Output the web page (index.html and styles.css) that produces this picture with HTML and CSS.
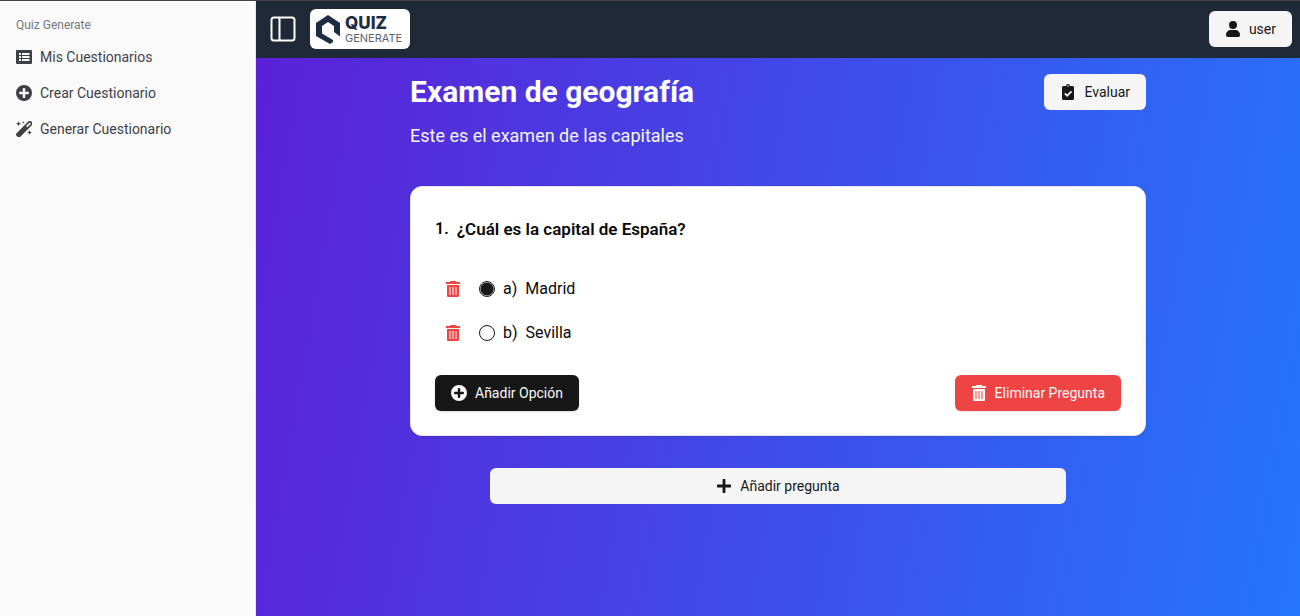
FILE: index.html
```html
<!DOCTYPE html>
<html lang="es">
<head>
<meta charset="utf-8">
<meta name="viewport" content="width=device-width, initial-scale=1">
<title>Quiz Generate</title>
<link rel="stylesheet" href="styles.css">
</head>
<body>
<svg class="sprite" aria-hidden="true">
  <symbol id="plus-circle" viewBox="0 0 512 512"><path d="M256 512A256 256 0 1 0 256 0a256 256 0 1 0 0 512zM216 376V296H136c-22 0-40-18-40-40s18-40 40-40h80v-80c0-22 18-40 40-40s40 18 40 40v80h80c22 0 40 18 40 40s-18 40-40 40h-80v80c0 22-18 40-40 40s-40-18-40-40z"/></symbol>
  <symbol id="trash" viewBox="0 0 16 16"><path d="M5.500 0h5l1 1H15v2H1V1h3.500z"/><path fill-rule="evenodd" d="M2 4h12v11a1 1 0 0 1-1 1H3a1 1 0 0 1-1-1zM4 6v8h2V6zM7 6v8h2V6zM10 6v8h2V6z"/><path opacity=".5" d="M4 6h2v8H4zM7 6h2v8H7zM10 6h2v8h-2z"/></symbol>
</svg>
<div class="app">
  <aside class="sidebar">
    <p class="sidebar-title">Quiz Generate</p>
    <nav class="menu">
      <a class="menu-item" href="#"><svg class="icon" viewBox="0 0 16 16"><path fill-rule="evenodd" d="M1 1h14a1 1 0 0 1 1 1v12a1 1 0 0 1-1 1H1a1 1 0 0 1-1-1V2a1 1 0 0 1 1-1zM3 4v2h2V4zM6 4v2h7.500V4zM3 7v2h2V7zM6 7v2h7.500V7zM3 10v2h2v-2zM6 10v2h7.500v-2z"/></svg>Mis Cuestionarios</a>
      <a class="menu-item" href="#"><svg class="icon"><use href="#plus-circle"/></svg>Crear Cuestionario</a>
      <a class="menu-item" href="#"><svg class="icon" viewBox="0 0 16 16"><path fill-rule="evenodd" transform="rotate(-45 8 8)" d="M-.5 5.700h17.500a1.500 1.500 0 0 1 1.500 1.500v2.200a1.500 1.500 0 0 1-1.500 1.500H-.5A1.500 1.500 0 0 1-2 9.400V7.200a1.500 1.500 0 0 1 1.500-1.500zM11.500 7.400v1.800h5.200V7.400z"/><path d="m2.500.3.7 1.700 1.800.7-1.800.7-.7 1.800-.7-1.800L0 2.700 1.800 2zM13.500 9l.7 1.800 1.800.7-1.800.7-.7 1.800-.7-1.800-1.800-.7 1.800-.7zM7.300 0l.4.900.9.4-.9.4-.4.900-.4-.900-.9-.4.900-.4z"/></svg>Generar Cuestionario</a>
    </nav>
  </aside>
  <div class="content">
    <header class="topbar">
      <button class="toggle" type="button" aria-label="Alternar menú"><svg class="toggle-icon" viewBox="0 0 26 26"><rect x="1.500" y="1.500" width="23" height="23" rx="2.500"/><path d="M9.500 1v24"/></svg></button>
      <a class="logo" href="#">
        <svg class="logo-mark" viewBox="0 0 24 29"><path d="M12 0 24 8v13.500L18 17v-6l-6-4-6 4v7.500L17 25v2l-3 2L0 21V8z"/></svg>
        <span class="logo-text"><span class="logo-quiz">QUIZ</span><span class="logo-generate">GENERATE</span></span>
      </a>
      <button class="button button-light user" type="button"><svg class="icon" viewBox="0 0 16 16"><circle cx="8" cy="4" r="4"/><path d="M1 14c0-3 2-5 5-5h4c3 0 5 2 5 5 0 1.300-.7 2-2 2H3c-1.300 0-2-.7-2-2z"/></svg>user</button>
    </header>
    <main class="main">
      <div class="quiz">
        <div class="quiz-head">
          <h1 class="quiz-title">Examen de geografía</h1>
          <button class="button button-light" type="button"><svg class="icon" viewBox="0 0 16 16"><path fill-rule="evenodd" d="M3.500 2H6a2 2 0 0 1 4 0h2.500A1.500 1.500 0 0 1 14 3.500v11a1.500 1.500 0 0 1-1.500 1.500h-9A1.500 1.500 0 0 1 2 14.500v-11A1.500 1.500 0 0 1 3.500 2zM8 1.200a.8.8 0 1 0 0 1.600.8.8 0 0 0 0-1.600zM4.200 10l2.900 2.900 5-4.900-1.200-1.300-3.800 3.800-1.600-1.700z"/></svg>Evaluar</button>
        </div>
        <p class="quiz-description">Este es el examen de las capitales</p>
        <section class="card">
          <div class="question"><span class="question-number">1.</span><h2 class="question-text">¿Cuál es la capital de España?</h2></div>
          <div class="options">
            <div class="option">
              <button class="delete" type="button" aria-label="Eliminar opción a"><svg class="icon"><use href="#trash"/></svg></button>
              <input class="radio" type="radio" name="q1" id="q1a" checked>
              <label class="option-label" for="q1a"><span>a)</span><span>Madrid</span></label>
            </div>
            <div class="option">
              <button class="delete" type="button" aria-label="Eliminar opción b"><svg class="icon"><use href="#trash"/></svg></button>
              <input class="radio" type="radio" name="q1" id="q1b">
              <label class="option-label" for="q1b"><span>b)</span><span>Sevilla</span></label>
            </div>
          </div>
          <div class="card-actions">
            <button class="button button-dark" type="button"><svg class="icon"><use href="#plus-circle"/></svg>Añadir Opción</button>
            <button class="button button-danger" type="button"><svg class="icon"><use href="#trash"/></svg>Eliminar Pregunta</button>
          </div>
        </section>
        <div class="add-row">
          <button class="button button-light add" type="button"><svg class="icon" viewBox="0 0 16 16"><path d="M7 1h2l.4.4v5.200h5.200L15 7v2l-.4.400H9.400v5.200L9 15H7l-.4-.4V9.400H1.400L1 9V7l.4-.4h5.200V1.400z"/></svg>Añadir pregunta</button>
        </div>
      </div>
    </main>
  </div>
</div>
</body>
</html>
```
FILE: styles.css
```css
* { box-sizing: border-box; }
body {
  margin: 0;
  font-family: Roboto, "Liberation Sans", sans-serif;
  color: #0a0a0a;
}
h1, h2, p { margin: 0; }
button, input { font: inherit; margin: 0; }
button { cursor: pointer; border: 0; }
a { color: inherit; text-decoration: none; }
.sprite { position: absolute; width: 0; height: 0; }
.icon { width: 16px; height: 16px; flex: none; fill: currentColor; }

.app { display: flex; min-height: 100vh; border-top: 1px solid #444447; }
.sidebar {
  width: 256px;
  flex: none;
  padding: 8px;
  background: #fafafa;
  border-right: 1px solid #e5e7eb;
  color: #3f3f46;
}
.sidebar-title {
  padding: 0 8px;
  font-size: 12px;
  line-height: 32px;
  color: #77777b;
}
.menu { display: flex; flex-direction: column; gap: 4px; }
.menu-item {
  display: flex;
  align-items: center;
  gap: 8px;
  height: 32px;
  padding: 0 8px;
  font-size: 14px;
}

.content { flex: 1; min-width: 0; display: flex; flex-direction: column; }
.topbar {
  display: flex;
  align-items: center;
  gap: 14px;
  padding: 8px 8px 9px 14px;
  background: #1f2937;
}
.toggle { display: flex; padding: 0; background: none; color: #fff; }
.toggle-icon { width: 26px; height: 26px; fill: none; stroke: currentColor; stroke-width: 2; }
.logo {
  display: flex;
  align-items: center;
  gap: 5px;
  height: 40px;
  padding: 0 8px 0 6px;
  border-radius: 6px;
  background: #fff;
  color: #1e2c46;
}
.logo-mark { width: 24px; height: 29px; fill: currentColor; }
.logo-text { display: flex; flex-direction: column; font-family: Inter, sans-serif; }
.logo-quiz { font-size: 17px; line-height: 18px; font-weight: 800; }
.logo-generate { font-size: 11px; line-height: 13px; color: #5b6472; }
.user { margin-left: auto; }

.button {
  display: inline-flex;
  align-items: center;
  justify-content: center;
  gap: 8px;
  height: 36px;
  padding: 0 16px;
  border-radius: 6px;
  font-size: 14px;
  line-height: 20px;
  white-space: nowrap;
}
.button-light { background: #f5f5f5; color: #171717; }
.button-dark { background: #171717; color: #fafafa; box-shadow: 0 1px 2px rgba(0, 0, 0, .15); }
.button-danger { background: #ef4444; color: #fafafa; box-shadow: 0 1px 2px rgba(0, 0, 0, .1); }

.main {
  flex: 1;
  padding: 16px;
  background: linear-gradient(100deg, #5b21d6, #2575fc);
}
.quiz { max-width: 736px; margin: 0 auto; }
.quiz-head { display: flex; justify-content: space-between; align-items: center; }
.quiz-title { font-size: 30px; line-height: 36px; font-weight: 700; color: #fff; }
.quiz-description { margin-top: 12px; font-size: 18px; line-height: 28px; color: #f5f5f5; }
.card {
  margin-top: 36px;
  padding: 24px;
  border: 1px solid #e5e5e5;
  border-radius: 12px;
  background: #fff;
  box-shadow: 0 1px 3px rgba(0, 0, 0, .1);
}
.question { display: flex; align-items: center; gap: 8px; height: 36px; line-height: 16px; font-weight: 600; }
.question-number { font-size: 16px; }
.question-text { font-size: 17px; font-weight: 600; }
.options { display: flex; flex-direction: column; gap: 8px; padding: 24px 0; }
.option { display: flex; align-items: center; height: 36px; }
.delete { display: flex; padding: 10px; background: none; color: #ef4444; }
.radio {
  appearance: none;
  width: 16px;
  height: 16px;
  margin: 0 8px;
  border: 1px solid #171717;
  border-radius: 50%;
}
.radio:checked { background: radial-gradient(circle, #171717 6px, #fff 7px); }
.option-label { display: flex; gap: 8px; font-size: 16px; line-height: 16px; }
.card-actions { display: flex; justify-content: space-between; }
.add-row { padding: 32px 80px 0; }
.add { width: 100%; }
```
